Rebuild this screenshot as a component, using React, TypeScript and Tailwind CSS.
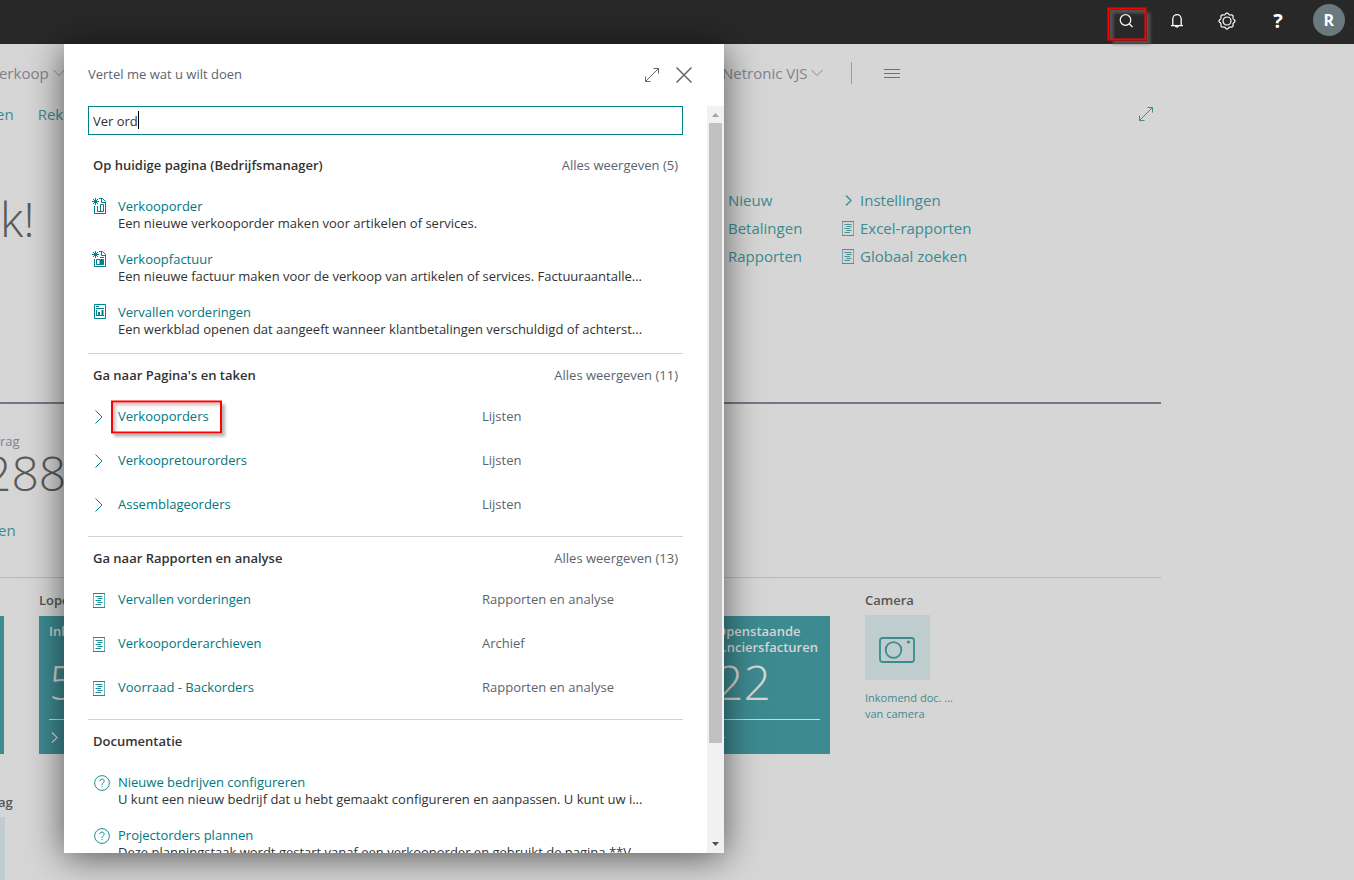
import type { ReactNode } from "react";

type IconProps = { className?: string };

/* Icons */
function SearchIcon() {
  return (
    <svg width="16" height="16" viewBox="0 0 16 16" fill="none" stroke="currentColor" strokeWidth="1.2">
      <circle cx="7.5" cy="7" r="5.3" />
      <path d="M11.2 10.8 L14.5 14" />
    </svg>
  );
}

function BellIcon() {
  return (
    <svg width="16" height="16" viewBox="0 0 16 16" fill="none" stroke="currentColor" strokeWidth="1.3">
      <path d="M3.8 12.5 V6 A4.2 4.4 0 0 1 12.2 6 V12.5" />
      <path d="M2 12.6 H14" />
      <path d="M6.5 13 A1.6 1.6 0 0 0 9.5 13" />
    </svg>
  );
}

// scalloped ring with eight lobes
const gearPath =
  Array.from({ length: 96 }, (_, i) => {
    const a = (i / 96) * Math.PI * 2;
    const r = 7.3 + 0.7 * Math.cos(a * 8);
    return `${i === 0 ? "M" : "L"}${(9 + r * Math.cos(a)).toFixed(2)} ${(9 + r * Math.sin(a)).toFixed(2)}`;
  }).join(" ") + " Z";

function GearIcon() {
  return (
    <svg width="18" height="18" viewBox="0 0 18 18" fill="none" stroke="currentColor" strokeWidth="1.2">
      <path d={gearPath} />
      <circle cx="9" cy="9" r="4" />
    </svg>
  );
}

function ExpandIcon({ className }: IconProps) {
  return (
    <svg className={className} width="16" height="16" viewBox="0 0 16 16" fill="none" stroke="currentColor">
      <path d="M1.5 14.5 L14.5 1.5 M9.5 1.5 H14.5 V6.5 M1.5 9.5 V14.5 H6.5" />
    </svg>
  );
}

function CloseIcon() {
  return (
    <svg width="16" height="16" viewBox="0 0 16 16" fill="none" stroke="currentColor" strokeWidth="1.5">
      <path d="M0.5 0.5 L15.5 15.5 M15.5 0.5 L0.5 15.5" />
    </svg>
  );
}

function ChevronDownIcon() {
  return (
    <svg width="12" height="8" viewBox="0 0 12 8" fill="none" stroke="currentColor" strokeWidth="0.9">
      <path d="M0.5 1 L6 6.5 L11.5 1" />
    </svg>
  );
}

function ChevronRightIcon({ className }: IconProps) {
  return (
    <svg className={className} width="8" height="14" viewBox="0 0 8 14" fill="none" stroke="currentColor">
      <path d="M0.5 0.5 L7 7 L0.5 13.5" />
    </svg>
  );
}

function SmallChevronIcon({ className }: IconProps) {
  return (
    <svg className={className} width="7" height="11" viewBox="0 0 7 11" fill="none" stroke="currentColor" strokeWidth="1.3">
      <path d="M1 0.5 L6 5.5 L1 10.5" />
    </svg>
  );
}

function ReportIcon({ className }: IconProps) {
  return (
    <svg className={className} width="12" height="15" viewBox="0 0 12 15" fill="none" stroke="currentColor">
      <path d="M0.5 0 V15 M11.5 0 V15" strokeOpacity="0.6" />
      <path d="M0 0.5 H12 M0 14.5 H12 M2.5 3.5 H9.5 M4.5 5.5 H9.5 M2.5 7.5 H8 M4.5 9.5 H9.5 M2.5 11.5 H8" strokeOpacity="0.9" />
    </svg>
  );
}

function NewOrderIcon() {
  return (
    <svg width="14" height="16" viewBox="0 0 14 16" fill="none" stroke="currentColor">
      <path d="M3.5 0 V7 M0 3.5 H7 M1 1 L6 6 M6 1 L1 6" />
      <path d="M7 0.5 H10.5 L13.5 3.5 V15.5 H2.5 V8 M9.5 1 V4.5 H13" />
      <path d="M5.5 8 V13.5 H11.5 V6.5 H8.5 V13.5" />
    </svg>
  );
}

function NewInvoiceIcon() {
  return (
    <svg width="14" height="16" viewBox="0 0 14 16" fill="none" stroke="currentColor">
      <path d="M3.5 0 V7 M0 3.5 H7 M1 1 L6 6 M6 1 L1 6" />
      <path d="M7 0.5 H10.5 L13.5 3.5 V15.5 H2.5 V8 M9.5 1 V4.5 H13 M8 6.5 H12" />
      <path d="M4.5 8.5 H11.5 V13.5 H4.5 Z" />
      <path d="M8 9 H11.5 V13 H8 Z" fill="currentColor" />
    </svg>
  );
}

function ChartPageIcon() {
  return (
    <svg className="ml-0.5" width="12" height="15" viewBox="0 0 12 15" fill="none" stroke="currentColor">
      <path d="M0.5 0.5 H11.5 V14.5 H0.5 Z M2 2.5 H5 M2 4.5 H10 M2.5 6 V12 M2 11.5 H10" />
      <path d="M5 8 V12 M8.5 6 V12" strokeWidth="2" />
    </svg>
  );
}

function HelpIcon() {
  return (
    <svg className="mt-px ml-0.5" width="16" height="16" viewBox="0 0 16 16" fill="none" stroke="currentColor" strokeWidth="0.9">
      <circle cx="8" cy="8" r="7.4" />
      <path d="M5.8 6.2 C5.8 3.4 10.2 3.4 10.2 6.1 C10.2 7.8 8 7.8 8 10" />
      <path d="M8 11.2 V12.2" />
    </svg>
  );
}

function CameraIcon() {
  return (
    <svg width="36" height="26" viewBox="0 0 36 26" fill="none" stroke="currentColor" strokeWidth="1.8">
      <rect x="1" y="1" width="34" height="24" rx="2.5" />
      <circle cx="14.5" cy="13" r="7.8" />
      <circle cx="29.5" cy="5" r="1.6" fill="currentColor" stroke="none" />
    </svg>
  );
}

/* Search panel */
type Result = {
  title: string;
  icon: ReactNode;
  description?: string;
  category?: string;
  highlighted?: boolean;
};

const pageResults: Result[] = [
  {
    title: "Verkooporder",
    icon: <NewOrderIcon />,
    description: "Een nieuwe verkooporder maken voor artikelen of services.",
  },
  {
    title: "Verkoopfactuur",
    icon: <NewInvoiceIcon />,
    description: "Een nieuwe factuur maken voor de verkoop van artikelen of services. Factuuraantalle...",
  },
  {
    title: "Vervallen vorderingen",
    icon: <ChartPageIcon />,
    description: "Een werkblad openen dat aangeeft wanneer klantbetalingen verschuldigd of achterst...",
  },
];

const taskResults: Result[] = [
  { title: "Verkooporders", icon: <ChevronRightIcon className="ml-[3px]" />, category: "Lijsten", highlighted: true },
  { title: "Verkoopretourorders", icon: <ChevronRightIcon className="ml-[3px]" />, category: "Lijsten" },
  { title: "Assemblageorders", icon: <ChevronRightIcon className="ml-[3px]" />, category: "Lijsten" },
];

const reportResults: Result[] = [
  { title: "Vervallen vorderingen", icon: <ReportIcon className="ml-px" />, category: "Rapporten en analyse" },
  { title: "Verkooporderarchieven", icon: <ReportIcon className="ml-px" />, category: "Archief" },
  { title: "Voorraad - Backorders", icon: <ReportIcon className="ml-px" />, category: "Rapporten en analyse" },
];

const docResults: Result[] = [
  {
    title: "Nieuwe bedrijven configureren",
    icon: <HelpIcon />,
    description: "U kunt een nieuw bedrijf dat u hebt gemaakt configureren en aanpassen. U kunt uw i...",
  },
  {
    title: "Projectorders plannen",
    icon: <HelpIcon />,
    description: "Deze planningstaak wordt gestart vanaf een verkooporder en gebruikt de pagina **V",
  },
];

function ResultRow({ result }: { result: Result }) {
  if (result.description) {
    return (
      <li className="flex pt-3.5 pb-[5px] pl-1">
        <span className="w-[26px] shrink-0 text-[#008089]">{result.icon}</span>
        <div className="min-w-0 flex-1 leading-[17px] whitespace-nowrap">
          <a href="#" className="block text-[#00787f]">
            {result.title}
          </a>
          <p className="overflow-hidden text-[#323232]">{result.description}</p>
        </div>
      </li>
    );
  }

  return (
    <li className="flex h-11 items-center pt-0.5 pl-1">
      <span className="w-[26px] shrink-0 text-[#008089]">{result.icon}</span>
      <div className="flex-1">
        <a href="#" className="relative inline-block text-[#00787f]">
          {result.title}
          {result.highlighted && (
            <span className="absolute top-1/2 -left-[7px] h-[33px] w-[111px] -translate-y-1/2 border-2 border-[#ff0000] shadow-[3px_3px_3px_rgba(0,0,0,0.3),inset_3px_3px_3px_rgba(0,0,0,0.2)]" />
          )}
        </a>
      </div>
      <span className="w-[201px] text-[#5c6470]">{result.category}</span>
    </li>
  );
}

function ResultSection({ title, count, results }: { title: string; count?: number; results: Result[] }) {
  return (
    <section className="border-b border-[#d2d2d2] pb-2.5 last:border-b-0">
      <div className="flex h-10 items-center justify-between px-[5px] pt-1">
        <h2 className="font-semibold text-[#333333]">{title}</h2>
        {count && (
          <a href="#" className="text-[#5c6470]">
            Alles weergeven ({count})
          </a>
        )}
      </div>
      <ul>
        {results.map((result) => (
          <ResultRow key={result.title} result={result} />
        ))}
      </ul>
    </section>
  );
}

function SearchPanel() {
  return (
    <div
      role="dialog"
      aria-labelledby="search-title"
      className="absolute top-11 bottom-[27px] left-16 flex w-[660px] flex-col bg-white pl-6 text-[13px] shadow-[0_4px_34px_rgba(0,0,0,0.6)]"
    >
      <div className="flex h-[62px] shrink-0 items-center pr-8">
        <h1 id="search-title" className="flex-1 text-[#5c6470]">
          <label htmlFor="search">Vertel me wat u wilt doen</label>
        </h1>
        <button type="button" aria-label="Uitvouwen" className="mr-4 text-[#666666]">
          <ExpandIcon />
        </button>
        <button type="button" aria-label="Sluiten" className="text-[#666666]">
          <CloseIcon />
        </button>
      </div>

      <div className="flex min-h-0 flex-1">
        <div className="min-w-0 flex-1 overflow-hidden pr-6">
          <div className="relative mb-[9px]">
            <input
              id="search"
              type="text"
              defaultValue="Ver ord"
              className="block h-[29px] w-full border border-[#008089] px-1 text-[#323232] caret-transparent outline-none"
            />
            <span className="absolute top-[5px] left-[50px] h-[18px] w-px bg-black" />
          </div>
          <ResultSection title="Op huidige pagina (Bedrijfsmanager)" count={5} results={pageResults} />
          <ResultSection title="Ga naar Pagina's en taken" count={11} results={taskResults} />
          <ResultSection title="Ga naar Rapporten en analyse" count={13} results={reportResults} />
          <ResultSection title="Documentatie" results={docResults} />
        </div>

        {/* Scrollbar */}
        <div className="flex w-[17px] shrink-0 flex-col items-center bg-[#f1f1f1]">
          <svg className="h-[17px] shrink-0" width="7" height="17" viewBox="0 0 7 17" fill="#a3a3a3">
            <path d="M0 11 L3.5 7 L7 11 Z" />
          </svg>
          <div className="w-full flex-1 px-0.5">
            <div className="h-[87%] bg-[#c1c1c1]" />
          </div>
          <svg className="h-[17px] shrink-0" width="7" height="17" viewBox="0 0 7 17" fill="#505050">
            <path d="M0 6 L3.5 10 L7 6 Z" />
          </svg>
        </div>
      </div>
    </div>
  );
}

/* Page behind the panel */
function TopBar() {
  return (
    <header className="flex h-11 shrink-0 justify-end bg-[#282828] text-white">
      <div className="flex h-[42px] w-[253px] *:flex *:flex-1 *:items-center *:justify-center">
        <button type="button" aria-label="Zoeken" className="relative">
          <SearchIcon />
          <span className="absolute top-1/2 left-1/2 ml-px mt-[3px] h-[33px] w-[39px] -translate-x-1/2 -translate-y-1/2 border-2 border-[#ff0000] shadow-[4px_4px_3px_rgba(110,110,110,0.6),inset_4px_4px_3px_rgba(110,110,110,0.6)]" />
        </button>
        <button type="button" aria-label="Meldingen">
          <BellIcon />
        </button>
        <button type="button" aria-label="Instellingen">
          <GearIcon />
        </button>
        <button type="button" className="text-xl font-bold">
          ?
        </button>
        <button type="button" className="pb-0.5">
          <span className="flex h-8 w-8 items-center justify-center rounded-full bg-[#69797e] text-base font-bold">
            R
          </span>
        </button>
      </div>
    </header>
  );
}

function Tile({ label, value }: { label: ReactNode; value: number }) {
  return (
    <a href="#" className="flex h-[138px] w-[124px] shrink-0 flex-col bg-[#3d8b91] px-2.5 pt-[7px] text-[#d6d6d6]">
      <span className="h-8 leading-4 font-semibold">{label}</span>
      <span className="h-[65px] border-b border-[#d6d6d6] text-5xl leading-[54px] font-light">{value}</span>
      <SmallChevronIcon className="mt-3 ml-0.5" />
    </a>
  );
}

function Home() {
  return (
    <main className="mr-[193px] flex-1 text-[15px] whitespace-nowrap text-[#3b8b8f]">
      <nav className="flex h-[58px] items-center text-[#7f838b]">
        <div className="flex w-[722px] shrink-0 items-center">
          <a href="#" className="-ml-2.5 mr-1">
            Verkoop
          </a>
          <ChevronDownIcon />
        </div>
        <a href="#" className="mr-1">
          Netronic VJS
        </a>
        <ChevronDownIcon />
        <span className="mx-7 h-[22px] w-px bg-[#9c9c9c]" />
        <button type="button" aria-label="Menu" className="ml-1">
          <svg width="16" height="9" viewBox="0 0 16 9" fill="none" stroke="#6c6f78">
            <path d="M0 0.5 H16 M0 4.5 H16 M0 8.5 H16" />
          </svg>
        </button>
      </nav>

      <div className="flex h-6 items-center">
        <a href="#" className="mr-6 -ml-1">
          en
        </a>
        <a href="#">Rek</a>
        <button type="button" aria-label="Uitvouwen" className="ml-auto pr-[7px]">
          <ExpandIcon />
        </button>
      </div>

      {/* Headline and actions */}
      <div className="flex h-[278px] border-b-2 border-[#737884] pt-[60px] leading-7">
        <p className="w-[728px] shrink-0 text-5xl leading-[66px] font-light text-[#5a5a5a]">k!</p>
        <ul className="w-[114px]">
          <li><a href="#">Nieuw</a></li>
          <li><a href="#">Betalingen</a></li>
          <li><a href="#">Rapporten</a></li>
        </ul>
        <ul>
          <li>
            <a href="#" className="flex items-center">
              <SmallChevronIcon className="mr-2 ml-[3px]" />
              Instellingen
            </a>
          </li>
          <li>
            <a href="#" className="flex items-center">
              <ReportIcon className="mr-1.5" />
              Excel-rapporten
            </a>
          </li>
          <li>
            <a href="#" className="flex items-center">
              <ReportIcon className="mr-1.5" />
              Globaal zoeken
            </a>
          </li>
        </ul>
      </div>

      {/* Activities */}
      <div className="h-[174px] border-b border-[#b9b9b9] pt-[29px]">
        <p className="text-[13px] leading-4 text-[#7f838b]">rag</p>
        <p className="-ml-4 text-5xl leading-[48px] font-light text-[#5a5a5a]">288</p>
        <a href="#" className="-ml-0.5 mt-[22px] block leading-[22px]">
          en
        </a>
      </div>

      {/* Tiles */}
      <div className="flex h-[176px] gap-[35px] pt-3 text-[13px]">
        <div className="mt-[26px] h-[138px] w-1 shrink-0 bg-[#3d8b91]" />
        <div className="w-[632px] shrink-0">
          <h2 className="h-[26px] pt-px font-semibold text-[#555555]">Lope</h2>
          <Tile label="Inko" value={5} />
        </div>
        <div className="pt-[26px]">
          <Tile
            label={
              <>
                Openstaande
                <br />
                ...nciersfacturen
              </>
            }
            value={22}
          />
        </div>
        <div>
          <h2 className="h-[25px] pt-px font-semibold text-[#555555]">Camera</h2>
          <a href="#" className="block text-[11px] leading-4">
            <span className="mb-2.5 flex h-[65px] w-[65px] items-center justify-center bg-[#bfcdce] pt-1 pr-0.5">
              <CameraIcon />
            </span>
            Inkomend doc. ...
            <br />
            van camera
          </a>
        </div>
      </div>

      <div className="pt-[38px]">
        <h2 className="-ml-0.5 h-[25px] text-[13px] leading-5 font-semibold text-[#555555]">ag</h2>
        <div className="h-16 w-[5px] bg-[#bfcdce]" />
      </div>
    </main>
  );
}

export default function App() {
  return (
    <div className="relative flex h-screen min-h-[600px] flex-col overflow-hidden bg-[#d6d6d6] font-['Open_Sans','Noto_Sans',sans-serif]">
      <TopBar />
      <Home />
      <SearchPanel />
    </div>
  );
}
